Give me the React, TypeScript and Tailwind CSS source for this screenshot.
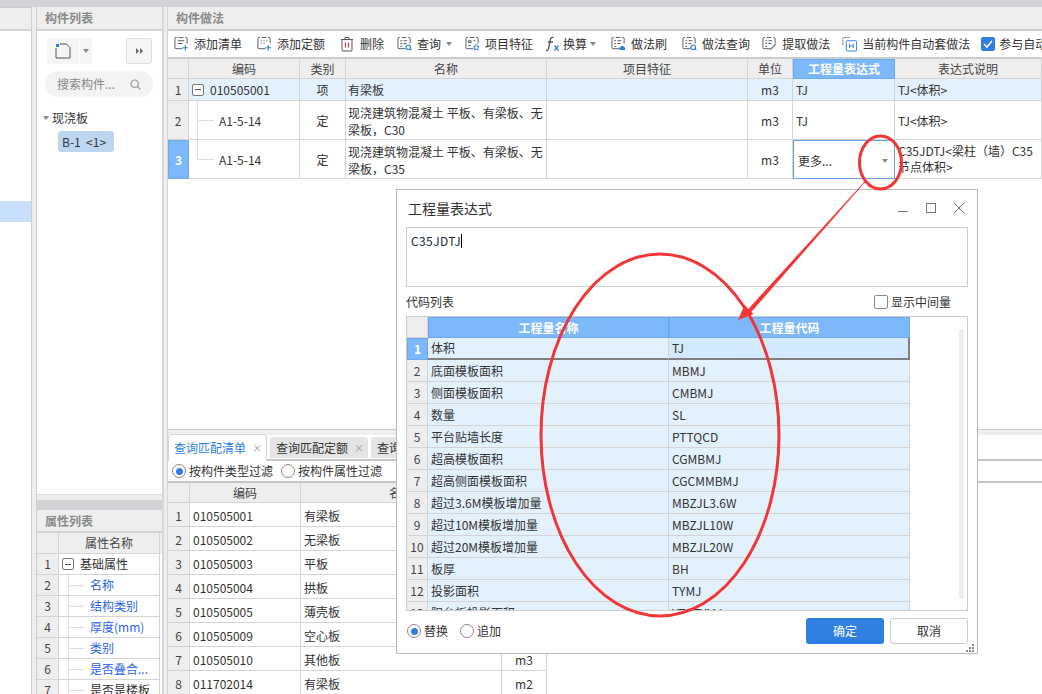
import type { ReactNode } from "react"

const line = "border-[#d4d4d4]"

function DocIcon({ children }: { children?: ReactNode }) {
  return (
    <svg width="15" height="16" viewBox="0 0 16 17" fill="none" className="shrink-0">
      <path d="M3 1.5h-1a1 1 0 0 0-1 1v10a1 1 0 0 0 1 1h7M14 8V2.5a1 1 0 0 0-1-1h-1M5 1.5h5" stroke="#555" strokeWidth="1" />
      {children}
    </svg>
  )
}

const ListLines = () => <path d="M3.5 5h2M7 5h4M3.5 8h2M7 8h3M3.5 11h2" stroke="#555" strokeWidth="1" />
const Lens = () => (
  <>
    <circle cx="12" cy="12" r="2.4" stroke="#2e7fe0" strokeWidth="1.2" />
    <path d="M13.8 13.8l1.6 1.6" stroke="#2e7fe0" strokeWidth="1.2" />
  </>
)

function ToolIcon({ kind }: { kind: string }) {
  if (kind === "del")
    return (
      <svg width="15" height="16" viewBox="0 0 15 16" fill="none" className="shrink-0">
        <path d="M1 3.5h12M5 3.5V1.5h4v2M2 3.5v10.5a1 1 0 0 0 1 1h8a1 1 0 0 0 1-1V3.5" stroke="#555" />
        <path d="M5.5 6.5v5M8.5 6.5v5" stroke="#e23b3b" strokeWidth="1.2" />
      </svg>
    )
  if (kind === "fx")
    return (
      <svg width="15" height="16" viewBox="0 0 15 16" fill="none" className="shrink-0">
        <path d="M8.5 1.5c-2-.6-2.8.6-3.2 2.5L3.5 12.5c-.4 1.8-1.2 2.2-2.5 1.8M3 6h5" stroke="#555" strokeWidth="1.3" />
        <path d="M9.5 9.5l4 5M13.5 9.5l-4 5" stroke="#2e7fe0" strokeWidth="1.3" />
      </svg>
    )
  if (kind === "add")
    return (
      <DocIcon>
        <path d="M4 5h7M4 8h5" stroke="#555" />
        <path d="M12 9.5v6M9 12.5h6" stroke="#2e7fe0" strokeWidth="1.2" />
      </DocIcon>
    )
  if (kind === "addq")
    return (
      <DocIcon>
        <path d="M4 5h1M7 5h1M10 5h1M4 8h1M7 8h1" stroke="#555" />
        <path d="M12 9.5v6M9 12.5h6" stroke="#2e7fe0" strokeWidth="1.2" />
      </DocIcon>
    )
  if (kind === "search")
    return (
      <DocIcon>
        <ListLines />
        <Lens />
      </DocIcon>
    )
  if (kind === "feat")
    return (
      <DocIcon>
        <path d="M3.5 5h3v2h-3zM3.5 10h3M9 5h2" stroke="#555" />
        <path d="M12 9l1 2 2 .3-1.5 1.5.4 2.2-1.9-1-1.9 1 .4-2.2L9 11.3l2-.3z" stroke="#2e7fe0" />
      </DocIcon>
    )
  if (kind === "brush")
    return (
      <DocIcon>
        <ListLines />
        <path d="M9 15v-3h1.5v-1.5h3V12H15v3z" fill="#2e7fe0" />
      </DocIcon>
    )
  if (kind === "pick")
    return (
      <DocIcon>
        <ListLines />
        <path d="M15 9l-5 5-1.5 1.5.5-2 5-5z" fill="#555" />
      </DocIcon>
    )
  return (
    <svg width="15" height="16" viewBox="0 0 16 16" fill="none" className="shrink-0">
      <path d="M1 9V2a1 1 0 0 1 1-1h7" stroke="#555" strokeDasharray="2 1" />
      <rect x="4.5" y="4.5" width="11" height="11" rx="1" stroke="#2e7fe0" />
      <path d="M8 7.5v5M12 7.5v5M8 10h4" stroke="#2e7fe0" />
    </svg>
  )
}

function Caret({ className = "" }: { className?: string }) {
  return <span className={`h-0 w-0 border-x-[3px] border-t-[4px] border-x-transparent border-t-[#888] ${className}`} />
}

function Tool({ icon, label, caret, className = "" }: { icon: string; label: string; caret?: boolean; className?: string }) {
  return (
    <div className={`flex shrink-0 items-center gap-[5px] ${className}`}>
      <ToolIcon kind={icon} />
      <span className="w-fit whitespace-nowrap">{label}</span>
      {caret && <Caret />}
    </div>
  )
}

function Minus() {
  return (
    <span className="flex h-[12px] w-[12px] shrink-0 items-center justify-center rounded-[2px] border border-[#777] bg-white">
      <span className="h-px w-[6px] bg-[#555]" />
    </span>
  )
}

function Radio({ on, label, gap = "gap-[3px]" }: { on?: boolean; label: string; gap?: string }) {
  return (
    <div className={`flex items-center ${gap}`}>
      <span className="flex h-[14px] w-[14px] items-center justify-center rounded-full border border-[#888] bg-white">
        {on && <span className="h-[7px] w-[7px] rounded-full bg-[#2e7fe0]" />}
      </span>
      <span>{label}</span>
    </div>
  )
}

// tree connector used in the code column and in the property list
function Branch({ half, width }: { half?: boolean; width: string }) {
  return (
    <div className={`relative flex items-center self-stretch ${width}`}>
      <div className={`absolute left-0 top-0 w-px bg-[#ddd] ${half ? "h-1/2" : "h-full"}`} />
      <div className="h-px w-full bg-[#ddd]" />
    </div>
  )
}

const headCell = `flex items-center justify-center border-r border-b ${line} bg-[#eeeeee] text-[#444]`
const idxCell = `flex items-center justify-center border-r border-b ${line} bg-[#eeeeee] text-[#444]`
const bodyCell = `flex items-center border-r border-b ${line} px-[3px]`
const activeHead = "flex items-center justify-center border border-[#6aaaf0] bg-[#7db8fb] font-bold text-white"

function PanelTitle({ children }: { children: ReactNode }) {
  return <div className="flex h-[22px] items-center bg-[#eeeeee] pl-[8px] font-bold text-[#8a8a8a]">{children}</div>
}

function MethodsTable() {
  return (
    <div className="grid grid-cols-[21px_111px_46px_201px_201px_45px_102px_147px] grid-rows-[20px_22px_39px_39px]">
      <div className={headCell} />
      <div className={headCell}>编码</div>
      <div className={headCell}>类别</div>
      <div className={headCell}>名称</div>
      <div className={headCell}>项目特征</div>
      <div className={headCell}>单位</div>
      <div className={activeHead}>工程量表达式</div>
      <div className={headCell}>表达式说明</div>

      <div className={idxCell}>1</div>
      <div className={`${bodyCell} gap-[6px] bg-[#e3f1fd]`}><Minus /><span>010505001</span></div>
      <div className={`${bodyCell} justify-center bg-[#e3f1fd]`}>项</div>
      <div className={`${bodyCell} !px-[2px] bg-[#e3f1fd]`}>有梁板</div>
      <div className={`${bodyCell} bg-[#e3f1fd]`} />
      <div className={`${bodyCell} justify-center bg-[#e3f1fd]`}>m3</div>
      <div className={`${bodyCell} bg-[#e3f1fd]`}>TJ</div>
      <div className={`${bodyCell} bg-[#e3f1fd]`}>TJ&lt;体积&gt;</div>

      <div className={`${idxCell} pt-[2px]`}>2</div>
      <div className={`${bodyCell} !pl-[8px]`}><Branch width="w-[17px]" /><span className="ml-[5px] pt-[2px]">A1-5-14</span></div>
      <div className={`${bodyCell} justify-center pt-[2px]`}>定</div>
      <div className={`${bodyCell} !px-[2px] pt-[2px] leading-[17px] whitespace-nowrap`}><span>现浇建筑物混凝土 平板、有梁板、无<br />梁板，C30</span></div>
      <div className={bodyCell} />
      <div className={`${bodyCell} justify-center pt-[2px]`}>m3</div>
      <div className={`${bodyCell} pt-[2px]`}>TJ</div>
      <div className={`${bodyCell} pt-[2px]`}>TJ&lt;体积&gt;</div>

      <div className="flex items-center justify-center border border-[#6aaaf0] bg-[#7db8fb] font-bold text-white">3</div>
      <div className={`${bodyCell} !pl-[8px]`}><Branch half width="w-[17px]" /><span className="ml-[5px] pt-[2px]">A1-5-14</span></div>
      <div className={`${bodyCell} justify-center pt-[2px]`}>定</div>
      <div className={`${bodyCell} !px-[2px] pt-[2px] leading-[17px] whitespace-nowrap`}><span>现浇建筑物混凝土 平板、有梁板、无<br />梁板，C35</span></div>
      <div className={bodyCell} />
      <div className={`${bodyCell} justify-center pt-[2px]`}>m3</div>
      <div className="flex items-center justify-between border border-[#5fa2ea] px-[4px] pr-[6px] pt-[2px]">
        <span>更多...</span>
        <Caret />
      </div>
      <div className={`${bodyCell} whitespace-nowrap leading-[16px]`}>
        <span>C35JDTJ&lt;梁柱（墙）C35<br />节点体积&gt;</span>
      </div>
    </div>
  )
}

const matches = [
  ["010505001", "有梁板", ""],
  ["010505002", "无梁板", ""],
  ["010505003", "平板", ""],
  ["010505004", "拱板", ""],
  ["010505005", "薄壳板", ""],
  ["010505009", "空心板", ""],
  ["010505010", "其他板", "m3"],
  ["011702014", "有梁板", "m2"],
]

function QueryPanel() {
  return (
    <div className="h-[265px] shrink-0 bg-white">
      <div className="h-[6px] border-t border-[#c4c5c9] bg-[#eeeeee]" />
      <div className="flex h-[26px] items-end border-b-2 border-[#c4c5c9]">
        <div className="z-10 -mb-[2px] flex h-[27px] w-[99px] items-center gap-[6px] rounded-t-[4px] border border-b-0 border-[#d4d4d4] bg-white pl-[5px] text-[#2e7fe0]">
          查询匹配清单 <span className="text-[10px] text-[#999]">×</span>
        </div>
        <div className="ml-[3px] mb-px flex h-[21px] w-[98px] items-center gap-[6px] rounded-t-[3px] bg-[#e4e4e4] pl-[6px]">
          查询匹配定额 <span className="text-[10px] text-[#999]">×</span>
        </div>
        <div className="ml-[3px] mb-px flex h-[21px] w-[60px] items-center rounded-t-[3px] bg-[#e4e4e4] pl-[6px] whitespace-nowrap">
          查询
        </div>
      </div>
      <div className="flex h-[22px] items-center gap-[8px] border-b-2 border-[#c4c5c9] pl-[4px]">
        <Radio on label="按构件类型过滤" />
        <Radio label="按构件属性过滤" />
      </div>
      <div className="grid w-[379px] grid-cols-[22px_111px_201px_45px] grid-rows-[20px] auto-rows-[24px]">
        <div className={headCell} />
        <div className={headCell}>编码</div>
        <div className={headCell}>名称</div>
        <div className={headCell} />
        {matches.map((m, i) => (
          <div key={m[0]} className="contents">
            <div className={`${idxCell} pt-[2px]`}>{i + 1}</div>
            <div className={`${bodyCell} pt-[2px]`}>{m[0]}</div>
            <div className={`${bodyCell} pt-[2px]`}>{m[1]}</div>
            <div className={`${bodyCell} justify-center pt-[2px]`}>{m[2]}</div>
          </div>
        ))}
      </div>
    </div>
  )
}

const props = ["名称", "结构类别", "厚度(mm)", "类别", "是否叠合...", "是否是楼板"]

function PropertyList() {
  return (
    <div className="bg-white">
      <div className="h-[10px] bg-[#d2d3d7]" />
      <div className="flex h-[21px] items-center bg-[#eeeeee] pl-[8px] font-bold text-[#8a8a8a]">属性列表</div>
      <div className="h-[2px] bg-[#d4d4d4]" />
      <div className="grid grid-cols-[22px_101px_2px] auto-rows-[21px]">
        <div className={headCell} />
        <div className={headCell}>属性名称</div>
        <div className="bg-[#eeeeee]" />
        <div className={idxCell}>1</div>
        <div className={`${bodyCell} gap-[6px]`}><Minus /><span>基础属性</span></div>
        <div />
        {props.map((p, i) => (
          <div key={p} className="contents">
            <div className={idxCell}>{i + 2}</div>
            <div className={`${bodyCell} !pl-[9px] ${i === 5 ? "text-[#333]" : "text-[#2c62ee]"}`}>
              <Branch width="w-[16px]" />
              <span className="ml-[6px] whitespace-nowrap">{p}</span>
            </div>
            <div />
          </div>
        ))}
      </div>
    </div>
  )
}

const codes = [
  ["体积", "TJ"],
  ["底面模板面积", "MBMJ"],
  ["侧面模板面积", "CMBMJ"],
  ["数量", "SL"],
  ["平台贴墙长度", "PTTQCD"],
  ["超高模板面积", "CGMBMJ"],
  ["超高侧面模板面积", "CGCMMBMJ"],
  ["超过3.6M模板增加量", "MBZJL3.6W"],
  ["超过10M模板增加量", "MBZJL10W"],
  ["超过20M模板增加量", "MBZJL20W"],
  ["板厚", "BH"],
  ["投影面积", "TYMJ"],
  ["阳台板投影面积", "YTBTYMJ"],
]

function ExpressionDialog() {
  return (
    <div className="absolute left-[396px] top-[189px] flex h-[465px] w-[582px] flex-col border border-[#bbbbbb] bg-white px-[9px]">
      <div className="flex h-[37px] shrink-0 items-center justify-between pb-[2px] pl-[2px] text-[14px]">
        <span>工程量表达式</span>
        <div className="flex items-center gap-[18px] pr-[4px] text-[#777]">
          <span className="mt-[8px] h-px w-[10px] bg-[#777]" />
          <span className="h-[10px] w-[10px] border border-[#777]" />
          <svg width="10" height="10" viewBox="0 0 10 10" stroke="#777" fill="none"><path d="M0 0l10 10M10 0L0 10" /></svg>
        </div>
      </div>
      <div className="h-[60px] shrink-0 border border-[#cccccc] px-[4px] pt-[4px] tracking-[0.4px] text-[#1a2a44]">
        C35JDTJ<span className="inline-block h-[14px] w-px translate-y-[2px] bg-black" />
      </div>
      <div className="flex h-[29px] shrink-0 items-center justify-between pr-[17px]">
        <span>代码列表</span>
        <div className="flex items-center gap-[3px]">
          <span className="h-[14px] w-[14px] rounded-[2px] border border-[#888]" />
          <span>显示中间量</span>
        </div>
      </div>
      <div className="flex h-[295px] shrink-0 overflow-hidden border border-[#cccccc]">
        <div className="grid w-[503px] shrink-0 grid-cols-[21px_241px_241px] grid-rows-[21px] auto-rows-[22px]">
          <div className={headCell} />
          <div className={activeHead}>工程量名称</div>
          <div className={activeHead}>工程量代码</div>
          {codes.map((c, i) => (
            <div key={c[1]} className="contents">
              <div className={i === 0 ? activeHead : idxCell}>{i + 1}</div>
              <div className={`${bodyCell} bg-[#e3f1fd] ${i === 0 ? "border-b-2 !border-b-[#808080]" : ""}`}>{c[0]}</div>
              <div className={`${bodyCell} ${i === 0 ? "border-b-2 border-r-2 !border-[#808080] bg-[#d4e9fd]" : "bg-[#e3f1fd]"}`}>{c[1]}</div>
            </div>
          ))}
        </div>
        <div className="ml-[49px] mt-[12px] h-[270px] w-[5px] rounded-full bg-[#ededed]" />
      </div>
      <div className="flex flex-1 items-start justify-between pt-[7px]">
        <div className="flex h-[26px] items-center gap-[12px] pl-px">
          <Radio on label="替换" />
          <Radio label="追加" />
        </div>
        <div className="flex gap-[6px]">
          <button className="flex h-[26px] w-[78px] items-center justify-center rounded-[3px] bg-[#2e7fe0] text-white">确定</button>
          <button className="flex h-[26px] w-[78px] items-center justify-center rounded-[3px] border border-[#cccccc] bg-white">取消</button>
        </div>
      </div>
      <svg width="9" height="8" viewBox="0 0 9 8" fill="#888" className="absolute bottom-[1px] right-[2px]">
        <rect x="6" y="0" width="2" height="2" />
        <rect x="3" y="3" width="2" height="2" />
        <rect x="6" y="3" width="2" height="2" />
        <rect x="0" y="6" width="2" height="2" />
        <rect x="3" y="6" width="2" height="2" />
        <rect x="6" y="6" width="2" height="2" />
      </svg>
    </div>
  )
}

function RedMarks() {
  return (
    <svg width="1042" height="694" viewBox="0 0 1042 694" fill="none" className="pointer-events-none absolute left-0 top-0">
      <ellipse cx="880.5" cy="162.5" rx="21" ry="26.5" stroke="#f23535" strokeWidth="3" />
      <ellipse cx="660" cy="435" rx="119" ry="181" stroke="#f23535" strokeWidth="3" />
      <path d="M866 180L866.6 180.6L750 313.5L747 310.5Z" fill="#f23535" />
      <path d="M738 320L744.5 305L753.5 314Z" fill="#f23535" />
    </svg>
  )
}

export default function App() {
  return (
    <div className="relative h-[694px] w-[1042px] overflow-hidden bg-[#eeeeee] text-[12px] leading-none text-[#333] [font-family:'Noto_Sans_CJK_SC','Noto_Sans',sans-serif]">
      <div className="h-[7px] bg-[#d2d3d7]" />
      <div className="flex h-[687px]">
        {/* far left panel */}
        <div className="w-[31px] shrink-0 bg-white">
          <div className="h-[22px] border-t border-[#ccc] bg-[#eeeeee]" />
          <div className="h-[2px] bg-[#d4d4d4]" />
          <div className="mt-[170px] h-[21px] bg-[#c7dffa]" />
        </div>
        <div className="ml-0 w-[6px] shrink-0 border-l border-r border-[#cfcfcf] bg-[#eeeeee]" />

        {/* component list */}
        <div className="flex w-[125px] shrink-0 flex-col">
          <div className="flex h-[488px] shrink-0 flex-col border-b border-[#ddd] bg-white">
            <PanelTitle>构件列表</PanelTitle>
            <div className="h-[2px] bg-[#d4d4d4]" />
            <div className="flex items-start pl-[10px] pt-[7px]">
              <div className="flex h-[26px] w-[32px] items-center justify-center bg-[#f5f5f5]">
                <svg width="16" height="16" viewBox="0 0 16 16" fill="none">
                  <path d="M1 5v10h14V4.5L11.5 1H5" stroke="#555" />
                  <rect x="1" y="1" width="3" height="3" fill="#2e7fe0" />
                </svg>
              </div>
              <div className="ml-px flex h-[26px] w-[12px] items-center justify-center bg-[#f5f5f5]"><Caret /></div>
              <div className="ml-[34px] flex h-[26px] w-[26px] items-center justify-center gap-px rounded-[3px] border border-[#dddddd] bg-[#f5f5f5]">
                <span className="h-0 w-0 border-y-[3px] border-l-[3px] border-y-transparent border-l-[#666]" />
                <span className="h-0 w-0 border-y-[3px] border-l-[3px] border-y-transparent border-l-[#666]" />
              </div>
            </div>
            <div className="ml-[8px] mt-[7px] flex h-[26px] w-[108px] items-center justify-between rounded-full bg-[#f3f3f3] pl-[12px] pr-[12px] text-[#888]">
              <span>搜索构件...</span>
              <svg width="11" height="11" viewBox="0 0 11 11" fill="none" stroke="#999" strokeWidth="1.2"><circle cx="4.7" cy="4.7" r="3.7" /><path d="M7.5 7.5l3 3" /></svg>
            </div>
            <div className="ml-[6px] mt-[15px] flex items-center gap-[3px]">
              <Caret />
              <span>现浇板</span>
            </div>
            <div className="ml-[21px] mt-[7px] flex h-[21px] w-[56px] items-center rounded-[3px] bg-[#bdd7f3] pl-[4px]">B-1&nbsp;&nbsp;&lt;1&gt;</div>
          </div>
          <div className="h-[5px] shrink-0" />
          <PropertyList />
        </div>
        <div className="w-[6px] shrink-0 border-l-2 border-r border-[#d8d8d8] bg-[#eeeeee]" />

        {/* component methods */}
        <div className="flex w-[874px] shrink-0 flex-col bg-white">
          <PanelTitle>构件做法</PanelTitle>
          <div className="h-[2px] shrink-0 bg-[#cccccc]" />
          <div className="flex h-[26px] shrink-0 items-center overflow-hidden pl-[6px]">
            <Tool icon="add" label="添加清单" />
            <Tool icon="addq" label="添加定额" className="ml-[15px]" />
            <Tool icon="del" label="删除" className="ml-[15px]" />
            <Tool icon="search" label="查询" caret className="ml-[13px]" />
            <Tool icon="feat" label="项目特征" className="ml-[13px]" />
            <Tool icon="fx" label="换算" caret className="ml-[12px] !gap-[3px]" />
            <Tool icon="brush" label="做法刷" className="ml-[15px]" />
            <Tool icon="search" label="做法查询" className="ml-[15px]" />
            <Tool icon="pick" label="提取做法" className="ml-[12px]" />
            <Tool icon="auto" label="当前构件自动套做法" className="ml-[12px]" />
            <div className="ml-[11px] flex shrink-0 items-center gap-[4px]">
              <span className="flex h-[14px] w-[14px] items-center justify-center rounded-[2px] bg-[#2e7fe0]">
                <svg width="10" height="10" viewBox="0 0 10 10" fill="none" stroke="white" strokeWidth="1.6"><path d="M1 5l3 3 5-6" /></svg>
              </span>
              <span className="whitespace-nowrap">参与自动</span>
            </div>
          </div>
          <div className="h-[2px] shrink-0 bg-[#cccccc]" />
          <MethodsTable />
          <div className="min-h-0 flex-1" />
          <QueryPanel />
        </div>
      </div>
      <ExpressionDialog />
      <RedMarks />
    </div>
  )
}
